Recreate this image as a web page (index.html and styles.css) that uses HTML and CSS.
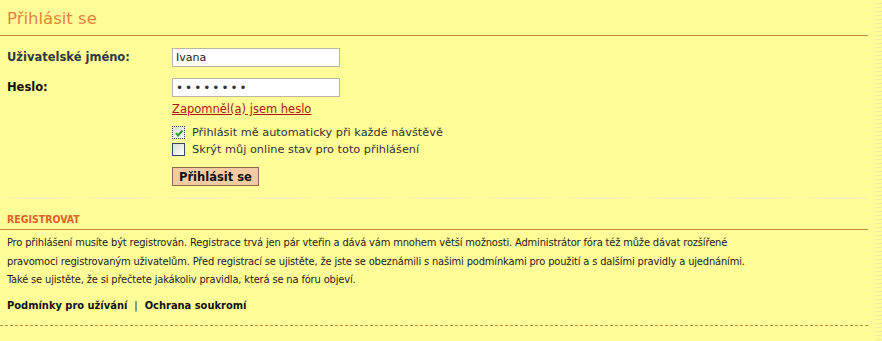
FILE: index.html
```html
<!DOCTYPE html>
<html lang="cs">
<head>
    <meta charset="UTF-8">
    <title>Přihlásit se</title>
    <link rel="stylesheet" href="styles.css">
</head>
<body>
    <div class="page">
        <main class="panel">
            <h2 class="title">Přihlásit se</h2>

            <form class="login">
                <div class="row">
                    <label for="user">Uživatelské jméno:</label>
                    <div class="field">
                        <input id="user" type="text" value="Ivana">
                    </div>
                </div>
                <div class="row">
                    <label for="pass" class="dark">Heslo:</label>
                    <div class="field">
                        <input id="pass" type="password" value="tajnehes">
                        <a href="#" class="forgot">Zapomněl(a) jsem heslo</a>
                    </div>
                </div>
                <div class="row">
                    <span></span>
                    <div class="field checks">
                        <label class="check"><span class="box checked"><svg viewBox="0 0 10 10" width="10" height="10"><path d="M2 5 L4 7.5 L8.5 2.5" fill="none" stroke="#2f9a2a" stroke-width="2"/></svg></span>Přihlásit mě automaticky při každé návštěvě</label>
                        <label class="check"><span class="box"></span>Skrýt můj online stav pro toto přihlášení</label>
                        <button type="button">Přihlásit se</button>
                    </div>
                </div>
            </form>

            <div class="wave"></div>

            <section class="register">
                <h3>REGISTROVAT</h3>
                <p>Pro přihlášení musíte být registrován. Registrace trvá jen pár vteřin a dává vám mnohem větší možnosti. Administrátor fóra též může dávat rozšířené<br>
                pravomoci registrovaným uživatelům. Před registrací se ujistěte, že jste se obeznámili s našimi podmínkami pro použití a s dalšími pravidly a ujednáními.<br>
                Také se ujistěte, že si přečtete jakákoliv pravidla, která se na fóru objeví.</p>
                <div class="links">
                    <a href="#">Podmínky pro užívání</a><span class="sep">|</span><a href="#">Ochrana soukromí</a>
                </div>
            </section>
            <hr class="dashed">
        </main>
        <aside class="edge"></aside>
    </div>
</body>
</html>
```
FILE: styles.css
```css
body{
    margin: 0;
    background-color: #fffd98;
    font-family: "DejaVu Sans", Verdana, sans-serif;
    font-size: 11px;
    color: #222;
}

.page{
    display: flex;
    height: 341px;
}

.panel{
    width: 868px;
}

.edge{
    flex-grow: 1;
    margin-left: 7px;
    background: repeating-linear-gradient(180deg, #fffd98 0 3px, #efeaa0 3px 4px);
}

.title{
    margin: 0;
    padding: 10px 7px 7px;
    font-size: 16.5px;
    line-height: 18px;
    font-weight: normal;
    color: #e3833f;
    border-bottom: 1px solid #c58a35;
}

.login{
    padding: 12px 0 0 7px;
}

.row{
    display: grid;
    grid-template-columns: 165px 1fr;
    margin-bottom: 11px;

    > label{
        font-weight: bold;
        font-size: 11.5px;
        color: #2e3a3f;
        padding-top: 2px;
    }
    > label.dark{
        color: #111;
    }
}

.field{
    display: flex;
    flex-direction: column;
    align-items: flex-start;

    input{
        box-sizing: border-box;
        width: 168px;
        height: 19px;
        padding: 2px 3px;
        border: 1px solid #b9b6a2;
        background: #fff;
        font-family: inherit;
        font-size: 11px;
        color: #222;
        margin: 0;
    }
    input[type=password]{
        font-size: 12px;
        letter-spacing: 2px;
        color: #333;
    }
}

.forgot{
    margin-top: 5px;
    font-size: 11.5px;
    color: #b01515;
}

.checks{
    margin-top: -3px;
}

.check{
    display: flex;
    align-items: center;
    gap: 7px;
    height: 17px;
    font-size: 11.3px;
    color: #333;
}

.box{
    width: 11px;
    height: 11px;
    border: 1px solid #2f4f5f;
    background: linear-gradient(135deg, #dcdcd4, #fdfdfb);
    display: flex;
    align-items: center;
    justify-content: center;

    &.checked{
        border-style: dotted;
    }
}

button{
    margin-top: 9px;
    padding: 1px 6px;
    height: 19px;
    background: #f6cba2;
    border: 1px solid #8a6a48;
    font-family: inherit;
    font-size: 11.5px;
    font-weight: bold;
    color: #111;
}

.wave{
    height: 2px;
    margin-top: 9px;
    background: repeating-linear-gradient(90deg, #fffd98 0, #f1efc0 40px, #fffd98 80px);
}

.register{
    padding-top: 14px;
    font-family: "DejaVu Sans Condensed", "DejaVu Sans", sans-serif;
    font-stretch: condensed;

    h3{
        margin: 0;
        padding: 0 7px 3px;
        font-size: 10.5px;
        line-height: 13px;
        color: #e0612a;
        border-bottom: 1px solid #c58a35;
    }
    p{
        margin: 4px 0 0;
        padding: 0 7px;
        line-height: 18.5px;
        letter-spacing: -0.15px;
    }
    p, .links{
        font-family: "DejaVu Sans Condensed", sans-serif;
    }
}

.links{
    padding: 9px 7px 0;
    font-weight: bold;
    color: #111;

    a{
        color: #111;
        text-decoration: none;
    }
    .sep{
        margin: 0 7px;
        font-weight: normal;
        color: #111;
    }
}

.dashed{
    margin: 13px 0 0;
    border: 0;
    border-top: 1px dashed #c58a35;
}
```
